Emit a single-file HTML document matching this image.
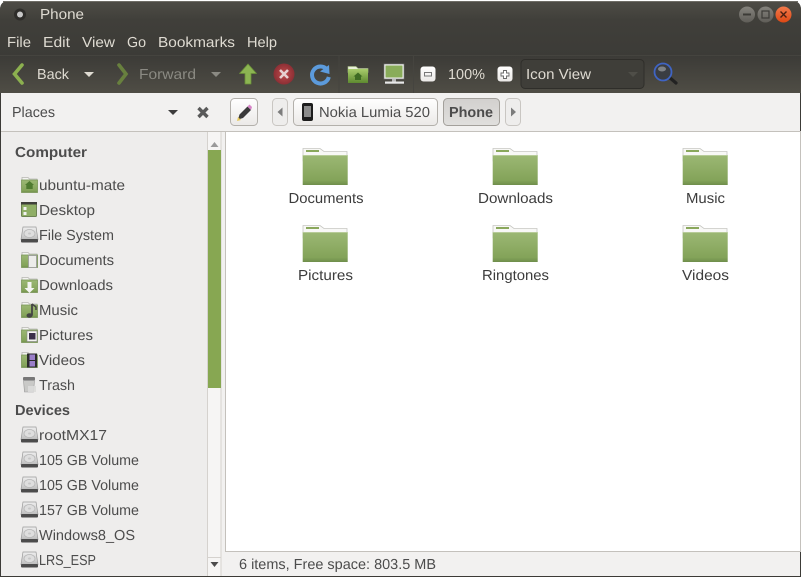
<!DOCTYPE html>
<html><head><meta charset="utf-8"><style>
html,body{margin:0;padding:0;background:#fff;width:802px;height:579px;overflow:hidden}
svg{display:block}
text{font-family:"Liberation Sans",sans-serif;font-size:14.5px;text-rendering:geometricPrecision}
.m{fill:#dfdbd2}
.s{fill:#4c4c4c}
.h{fill:#4c4c4c;font-weight:bold}
.f{fill:#3c3c3c;text-anchor:middle}
</style></head><body>
<svg width="802" height="579" viewBox="0 0 802 579" xmlns="http://www.w3.org/2000/svg">
<defs>
<linearGradient id="tb" x1="0" y1="0" x2="0" y2="1"><stop offset="0" stop-color="#4e4c46"/><stop offset=".35" stop-color="#403f3a"/><stop offset="1" stop-color="#3c3b37"/></linearGradient>
<linearGradient id="tl" x1="0" y1="0" x2="0" y2="1"><stop offset="0" stop-color="#3c3b37"/><stop offset="1" stop-color="#4f4d45"/></linearGradient>
<linearGradient id="fg" x1="0" y1="0" x2="0" y2="1"><stop offset="0" stop-color="#9cb874"/><stop offset=".85" stop-color="#83a359"/><stop offset="1" stop-color="#6f8e4b"/></linearGradient>
<linearGradient id="gb" x1="0" y1="0" x2="0" y2="1"><stop offset="0" stop-color="#a9cc6c"/><stop offset="1" stop-color="#5e8a30"/></linearGradient>
<linearGradient id="hd" x1="0" y1="0" x2="0" y2="1"><stop offset="0" stop-color="#efefef"/><stop offset="1" stop-color="#bdbdbd"/></linearGradient>
<linearGradient id="btn" x1="0" y1="0" x2="0" y2="1"><stop offset="0" stop-color="#fff"/><stop offset="1" stop-color="#ebe9e7"/></linearGradient>
<linearGradient id="act" x1="0" y1="0" x2="0" y2="1"><stop offset="0" stop-color="#d2d0ce"/><stop offset="1" stop-color="#e0dfdd"/></linearGradient>
<radialGradient id="rd"><stop offset="0" stop-color="#c04a4a"/><stop offset="1" stop-color="#8c2f35"/></radialGradient>
<linearGradient id="cl" x1="0" y1="0" x2="0" y2="1"><stop offset="0" stop-color="#f27a4c"/><stop offset="1" stop-color="#dd4814"/></linearGradient>
<linearGradient id="wb" x1="0" y1="0" x2="0" y2="1"><stop offset="0" stop-color="#85837d"/><stop offset="1" stop-color="#5f5d58"/></linearGradient>
<symbol id="folder" viewBox="0 0 48 40" overflow="visible">
<path d="M2 1.500H19L23 4.500H46V14H2z" fill="#f8f8f6" stroke="#c6c6c2" stroke-width=".8"/>
<rect x="5" y="3" width="13" height="2" fill="#8aa85c"/>
<rect x="1.700" y="8" width="45" height="30" fill="url(#fg)"/>
<rect x="1.700" y="8" width="45" height="1" fill="#b7cb98"/>
</symbol>
<symbol id="sf" viewBox="0 0 17 18" overflow="visible">
<path d="M1 1.500h6l1.500 1.500h7.500v3H1z" fill="#f3f3f1" stroke="#b5b5b0" stroke-width=".8"/>
<rect x=".5" y="4" width="16" height="12.500" fill="url(#fg)" stroke="#7b9659" stroke-width=".8"/>
</symbol>
<symbol id="hdd" viewBox="0 0 17 18" overflow="visible">
<path d="M2 1h13l2 12.500H0z" fill="url(#hd)" stroke="#999" stroke-width=".7"/>
<ellipse cx="8.500" cy="7.500" rx="5.500" ry="4" fill="#dedede" stroke="#b5b5b5" stroke-width=".7"/>
<ellipse cx="8.500" cy="7.500" rx="1.500" ry="1" fill="#c6c6c6"/>
<rect x="0" y="13" width="17" height="3.500" rx="1" fill="#4c4c4c"/>
</symbol>
</defs>

<!-- window -->
<path d="M0 579V10Q0 1 9 1H793Q802 1 802 10V579z" fill="#fff"/>
<path d="M0 577V10Q0 1 9 1H792Q801 1 801 10V577z" fill="#3c3b37"/>
<path d="M0 56V10Q0 1 9 1H792Q801 1 801 10V56z" fill="url(#tb)"/>
<path d="M3 1.500H798" stroke="#6f6d66" stroke-width="1"/>
<rect x="0" y="56" width="801" height="37" fill="url(#tl)"/>
<path d="M0 55.500H801" stroke="#45443f" stroke-width="1"/>
<rect x="1" y="93" width="800" height="484" fill="#f2f1f0"/>
<rect x="0" y="93" width="1" height="484" fill="#3c3b37"/>
<rect x="801" y="93" width="1" height="484" fill="#fff"/>
<rect x="800" y="93" width="1" height="484" fill="#3c3b37"/>
<rect x="0" y="576" width="801" height="1" fill="#3c3b37"/>

<!-- title -->
<circle cx="20" cy="14.500" r="6" fill="#2e2d2a"/>
<circle cx="20" cy="14.500" r="3" fill="#c8c8c8"/>
<text x="40" y="19" fill="#dfdbd2" textLength="44" lengthAdjust="spacingAndGlyphs">Phone</text>

<!-- window buttons -->
<circle cx="747" cy="14.500" r="8" fill="url(#wb)"/><rect x="743" y="13.500" width="8" height="2" fill="#3c3b37"/>
<circle cx="765.500" cy="14.500" r="8" fill="url(#wb)"/><rect x="762" y="11" width="7" height="7" fill="none" stroke="#3c3b37" stroke-width="1.200"/>
<circle cx="783.500" cy="14.500" r="8" fill="url(#cl)"/><path d="M780.500 11.500l6 6m0-6l-6 6" stroke="#4a2012" stroke-width="1.400"/>

<!-- menu -->
<text class="m" x="7" y="47" textLength="24" lengthAdjust="spacingAndGlyphs">File</text>
<text class="m" x="43" y="47" textLength="27" lengthAdjust="spacingAndGlyphs">Edit</text>
<text class="m" x="82" y="47" textLength="33" lengthAdjust="spacingAndGlyphs">View</text>
<text class="m" x="127" y="47" textLength="19" lengthAdjust="spacingAndGlyphs">Go</text>
<text class="m" x="158" y="47" textLength="77" lengthAdjust="spacingAndGlyphs">Bookmarks</text>
<text class="m" x="247" y="47" textLength="30" lengthAdjust="spacingAndGlyphs">Help</text>

<!-- toolbar -->
<path d="M22 65l-7.500 9 7.500 9" fill="none" stroke="#8cb04f" stroke-width="3.600" stroke-linecap="round"/>
<text x="37" y="79" fill="#dfdbd2" textLength="32" lengthAdjust="spacingAndGlyphs">Back</text>
<path d="M84 72h10l-5 5z" fill="#dfdbd2"/>
<path d="M119 65l7 9-7 9" fill="none" stroke="#68803e" stroke-width="3.600" stroke-linecap="round"/>
<text x="139" y="79" fill="#8b8a83" textLength="57" lengthAdjust="spacingAndGlyphs">Forward</text>
<path d="M211 72h10l-5 5z" fill="#8b8a83"/>
<path d="M248 64l-8.500 9.500h5.500V84h6V73.500h5.500z" fill="#8cb552" stroke="#6a8f38" stroke-width=".8" stroke-linejoin="round"/>
<circle cx="284" cy="74" r="10.500" fill="url(#rd)"/>
<path d="M280 70l8 8m0-8l-8 8" stroke="#e6cfcf" stroke-width="2.600"/>
<path d="M327 69.500a8.500 8.500 0 1 0 1.800 7.500" fill="none" stroke="#5c9bdc" stroke-width="4"/>
<path d="M320 71.500l9-6.500 .5 9z" fill="#5c9bdc"/>
<rect x="338.500" y="56" width="1" height="37" fill="#45443f"/>
<!-- home folder -->
<path d="M348 66.500h8l2 2h10v4h-20z" fill="#e8efd9" stroke="#a9c184" stroke-width=".6"/>
<rect x="348" y="69" width="20" height="14" fill="url(#gb)"/>
<path d="M358 72.500l-4.500 4h1.500v3.500h6v-3.500h1.500z" fill="#3f6b23"/>
<!-- computer -->
<rect x="384" y="64" width="20" height="15" fill="#eee" stroke="#777" stroke-width=".6"/>
<rect x="385.500" y="65.500" width="17" height="12" fill="#89ac5a"/>
<rect x="392" y="79" width="4" height="3" fill="#bbb"/>
<rect x="385" y="81.500" width="19" height="2.200" fill="#e8e8e8"/>
<rect x="413" y="56" width="1" height="37" fill="#45443f"/>
<!-- zoom -->
<rect x="420.500" y="66.500" width="15" height="15" rx="3" fill="url(#btn)"/>
<rect x="424.500" y="72.500" width="7" height="3.500" fill="none" stroke="#777" stroke-width="1"/>
<text x="448" y="79" fill="#dfdbd2" textLength="37" lengthAdjust="spacingAndGlyphs">100%</text>
<rect x="497.500" y="66.500" width="15" height="15" rx="3" fill="url(#btn)"/>
<path d="M503.500 70.500h3v2.500h2.500v3h-2.500v2.500h-3v-2.500h-2.500v-3h2.500z" fill="#fff" stroke="#666" stroke-width=".9"/>
<rect x="521" y="59.500" width="123" height="29" rx="4" fill="#3f3e39" stroke="#2f2e2a" stroke-width="1"/>
<text x="526" y="79" fill="#dfdbd2" textLength="65" lengthAdjust="spacingAndGlyphs">Icon View</text>
<path d="M628 72h10l-5 5z" fill="#4f4e48"/>
<!-- search -->
<path d="M669 77l7 6" stroke="#222" stroke-width="3.200" stroke-linecap="round"/>
<circle cx="663" cy="72" r="8.500" fill="#3a3d42" stroke="#3f64c4" stroke-width="1.800"/>
<ellipse cx="662" cy="69" rx="4" ry="2.500" fill="#7f8286"/>

<!-- location bar -->
<text class="s" x="12" y="117" textLength="43" lengthAdjust="spacingAndGlyphs">Places</text>
<path d="M168 110h10l-5 5z" fill="#3c3c3c"/>
<path d="M198.500 108l9 9m0-9l-9 9" stroke="#5a5a5a" stroke-width="3.400"/>
<rect x="230.500" y="98.500" width="27" height="27" rx="4" fill="url(#btn)" stroke="#b3b0ab"/>
<path d="M238 119.500l1.500-5 8-8 3.500 3.500-8 8z" fill="#3a3a3a"/>
<path d="M237 121l1-4 3 3z" fill="#e6c85c"/>
<path d="M247.500 106.500l2-2 2.500 2.500-1 3z" fill="#d884c8"/>
<rect x="272.500" y="98.500" width="15" height="27" rx="4" fill="#eeedec" stroke="#c9c6c2"/>
<path d="M282.500 107.500v9l-5-4.500z" fill="#7c7c7c"/>
<rect x="293.500" y="98.500" width="144" height="27" rx="4" fill="url(#btn)" stroke="#b3b0ab"/>
<rect x="302" y="103" width="11" height="18" rx="2" fill="#1d1d1d"/>
<rect x="304" y="106" width="7" height="11" fill="#8b8b8b"/>
<text class="s" x="319" y="117" textLength="111" lengthAdjust="spacingAndGlyphs">Nokia Lumia 520</text>
<rect x="443.500" y="98.500" width="56" height="27" rx="4" fill="url(#act)" stroke="#a3a09b"/>
<text class="h" x="449" y="117" textLength="44" lengthAdjust="spacingAndGlyphs">Phone</text>
<rect x="505.500" y="98.500" width="15" height="27" rx="4" fill="#eeedec" stroke="#c9c6c2"/>
<path d="M511 107.500v9l5-4.500z" fill="#7c7c7c"/>

<!-- sidebar -->
<rect x="1" y="132" width="207" height="444" fill="#eeedec"/>
<rect x="1" y="131" width="800" height="1" fill="#c4c1bc"/>
<rect x="207" y="132" width="14" height="444" fill="#f6f5f4"/>
<rect x="207" y="132" width="1" height="444" fill="#d5d2ce"/>
<rect x="220.500" y="132" width="1" height="444" fill="#d5d2ce"/>
<rect x="208" y="150" width="13" height="238" fill="#87a752"/>
<path d="M210.500 147l4-5 4 5z" fill="#9a9a9a"/>
<path d="M210.500 562h8l-4 5z" fill="#4c4c4c"/>
<rect x="208" y="557" width="13" height="1" fill="#d5d2ce"/>

<text class="h" x="15" y="157" textLength="72" lengthAdjust="spacingAndGlyphs">Computer</text>
<use href="#sf" x="21" y="176" width="17" height="18"/>
<path d="M29.500 181l-4.500 4h1.300v4h6.400v-4h1.300z" fill="#4f7a30"/>
<text class="s" x="39" y="190" textLength="86" lengthAdjust="spacingAndGlyphs">ubuntu-mate</text>

<rect x="21.500" y="202.500" width="15" height="14" rx="1" fill="#8fae66" stroke="#6c8252"/>
<rect x="21" y="202" width="16" height="2.500" fill="#3f3f3a"/>
<rect x="23.500" y="207" width="3" height="3" fill="#f2f2f2"/><rect x="23.500" y="212" width="3" height="3" fill="#f2f2f2"/>
<text class="s" x="39" y="215" textLength="56" lengthAdjust="spacingAndGlyphs">Desktop</text>

<use href="#hdd" x="21" y="226" width="17" height="18"/>
<text class="s" x="39" y="240" textLength="75" lengthAdjust="spacingAndGlyphs">File System</text>

<use href="#sf" x="21" y="251" width="17" height="18"/>
<rect x="28.500" y="255.500" width="8" height="12" fill="#ececea" stroke="#999" stroke-width=".8"/>
<text class="s" x="39" y="265" textLength="75" lengthAdjust="spacingAndGlyphs">Documents</text>

<use href="#sf" x="21" y="276" width="17" height="18"/>
<path d="M29.500 293l-5-5h3v-6h4v6h3z" fill="#f4f4f2"/>
<text class="s" x="39" y="290" textLength="74" lengthAdjust="spacingAndGlyphs">Downloads</text>

<use href="#sf" x="21" y="301" width="17" height="18"/>
<path d="M32 304v11.500" stroke="#444" stroke-width="1.800"/><ellipse cx="29.500" cy="315.500" rx="3" ry="2.300" fill="#444"/><path d="M32 304l4 3v3" fill="none" stroke="#444" stroke-width="1.500"/>
<text class="s" x="39" y="315" textLength="39" lengthAdjust="spacingAndGlyphs">Music</text>

<use href="#sf" x="21" y="326" width="17" height="18"/>
<rect x="27" y="331" width="10" height="10.500" fill="#f4f4f2" stroke="#888" stroke-width=".6"/>
<rect x="29" y="333" width="6.500" height="6.500" fill="#3a2f4a"/>
<text class="s" x="39" y="340" textLength="54" lengthAdjust="spacingAndGlyphs">Pictures</text>

<use href="#sf" x="21" y="351" width="17" height="18"/>
<rect x="27" y="353.500" width="10" height="14" fill="#2b2b2b"/>
<rect x="29.500" y="354.500" width="5.500" height="5.500" fill="#9a7fc8"/><rect x="29.500" y="361" width="5.500" height="5.500" fill="#9a7fc8"/>
<text class="s" x="39" y="365" textLength="46" lengthAdjust="spacingAndGlyphs">Videos</text>

<rect x="23" y="377" width="12" height="3.500" rx="1" fill="#777"/>
<path d="M23.500 380.500h11l-1 11.500h-9z" fill="#c9c9c7" stroke="#999" stroke-width=".6"/>
<path d="M28 386h8v6h-8z" fill="#dcdcda" opacity=".9"/>
<text class="s" x="39" y="390" textLength="36" lengthAdjust="spacingAndGlyphs">Trash</text>

<text class="h" x="15" y="415" textLength="55" lengthAdjust="spacingAndGlyphs">Devices</text>
<use href="#hdd" x="21" y="426" width="17" height="18"/>
<text class="s" x="39" y="440" textLength="68" lengthAdjust="spacingAndGlyphs">rootMX17</text>
<use href="#hdd" x="21" y="451" width="17" height="18"/>
<text class="s" x="39" y="465" textLength="100" lengthAdjust="spacingAndGlyphs">105 GB Volume</text>
<use href="#hdd" x="21" y="476" width="17" height="18"/>
<text class="s" x="39" y="490" textLength="100" lengthAdjust="spacingAndGlyphs">105 GB Volume</text>
<use href="#hdd" x="21" y="501" width="17" height="18"/>
<text class="s" x="39" y="515" textLength="100" lengthAdjust="spacingAndGlyphs">157 GB Volume</text>
<use href="#hdd" x="21" y="526" width="17" height="18"/>
<text class="s" x="39" y="540" textLength="96" lengthAdjust="spacingAndGlyphs">Windows8_OS</text>
<use href="#hdd" x="21" y="551" width="17" height="18"/>
<text class="s" x="39" y="565" textLength="57" lengthAdjust="spacingAndGlyphs">LRS_ESP</text>

<!-- content -->
<rect x="225.500" y="131.500" width="575" height="420" fill="#fff" stroke="#c4c1bc"/>
<use href="#folder" x="301" y="147" width="48" height="40"/>
<use href="#folder" x="491" y="147" width="48" height="40"/>
<use href="#folder" x="681" y="147" width="48" height="40"/>
<use href="#folder" x="301" y="224" width="48" height="40"/>
<use href="#folder" x="491" y="224" width="48" height="40"/>
<use href="#folder" x="681" y="224" width="48" height="40"/>
<text class="f" x="326" y="203" textLength="75" lengthAdjust="spacingAndGlyphs">Documents</text>
<text class="f" x="515.500" y="203" textLength="75" lengthAdjust="spacingAndGlyphs">Downloads</text>
<text class="f" x="705.500" y="203" textLength="39" lengthAdjust="spacingAndGlyphs">Music</text>
<text class="f" x="325.500" y="280" textLength="55" lengthAdjust="spacingAndGlyphs">Pictures</text>
<text class="f" x="515.500" y="280" textLength="67" lengthAdjust="spacingAndGlyphs">Ringtones</text>
<text class="f" x="705.500" y="280" textLength="47" lengthAdjust="spacingAndGlyphs">Videos</text>

<!-- status -->
<text class="s" x="239" y="569" textLength="197" lengthAdjust="spacingAndGlyphs">6 items, Free space: 803.5 MB</text>
</svg>
</body></html>
